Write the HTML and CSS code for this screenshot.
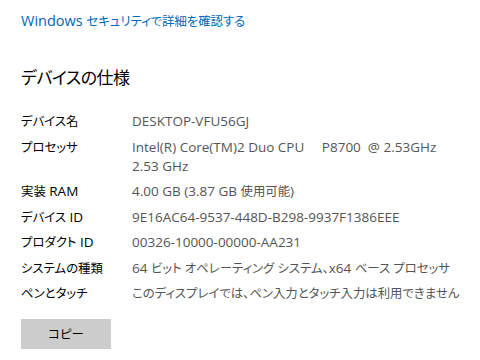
FILE: index.html
```html
<!DOCTYPE html>
<html lang="ja">
  <head>
    <link rel="stylesheet" href="styles.css">
    <title>バージョン情報</title>
  </head>
  <body>
    <a class="link" href="#">Windows <span class="jp">セキュリティで詳細を確認する</span></a>

    <h2 class="title">デバイスの仕様</h2>

    <div class="specs">
      <div class="label"><span class="jp">デバイス名</span></div>
      <div class="value">DESKTOP-VFU56GJ</div>

      <div class="label"><span class="jp">プロセッサ</span></div>
      <div class="value">Intel(R) Core(TM)2 Duo CPU&nbsp;&nbsp;&nbsp;&nbsp;&nbsp;P8700&nbsp;&nbsp;@ 2.53GHz<br>2.53 GHz</div>

      <div class="label"><span class="jp">実装</span> RAM</div>
      <div class="value">4.00 GB (3.87 GB <span class="jp">使用可能</span>)</div>

      <div class="label"><span class="jp">デバイス</span> ID</div>
      <div class="value">9E16AC64-9537-448D-B298-9937F1386EEE</div>

      <div class="label"><span class="jp">プロダクト</span> ID</div>
      <div class="value">00326-10000-00000-AA231</div>

      <div class="label"><span class="jp">システムの種類</span></div>
      <div class="value">64 <span class="jp">ビット オペレーティング システム、</span>x64 <span class="jp">ベース プロセッサ</span></div>

      <div class="label"><span class="jp">ペンとタッチ</span></div>
      <div class="value"><span class="jp">このディスプレイでは、ペン入力とタッチ入力は利用できません</span></div>
    </div>

    <button class="copy-btn">コピー</button>
  </body>
</html>
```
FILE: styles.css
```css
body {
  margin: 0;
  padding: 11px 21px;
  background-color: #ffffff;
  font-family: "Open Sans", "Noto Sans CJK JP", sans-serif;
  font-size: 13.5px;
  font-feature-settings: "palt";
  color: #000000;
}

.jp {
  font-size: 12.4px;
}

.link {
  display: block;
  font-size: 14.5px;
  line-height: 20px;
  color: #0067b8;
  text-decoration: none;
}

.link .jp {
  font-size: 12.4px;
}

.title {
  margin: 32px 0 20px 0;
  font-size: 17px;
  letter-spacing: -0.5px;
  font-weight: normal;
  line-height: 28px;
}

.specs {
  display: grid;
  grid-template-columns: 111px 1fr;
  row-gap: 6.5px;
  line-height: 19px;
}

.label {
  color: #000000;
  white-space: nowrap;
}

.value {
  color: #555555;
  white-space: nowrap;
}

.copy-btn {
  margin-top: 16px;
  width: 90px;
  height: 30px;
  border: none;
  background-color: #cccccc;
  font-family: "Noto Sans CJK JP", sans-serif;
  font-size: 12.4px;
  font-feature-settings: "palt";
  color: #000000;
  cursor: pointer;
}
```
